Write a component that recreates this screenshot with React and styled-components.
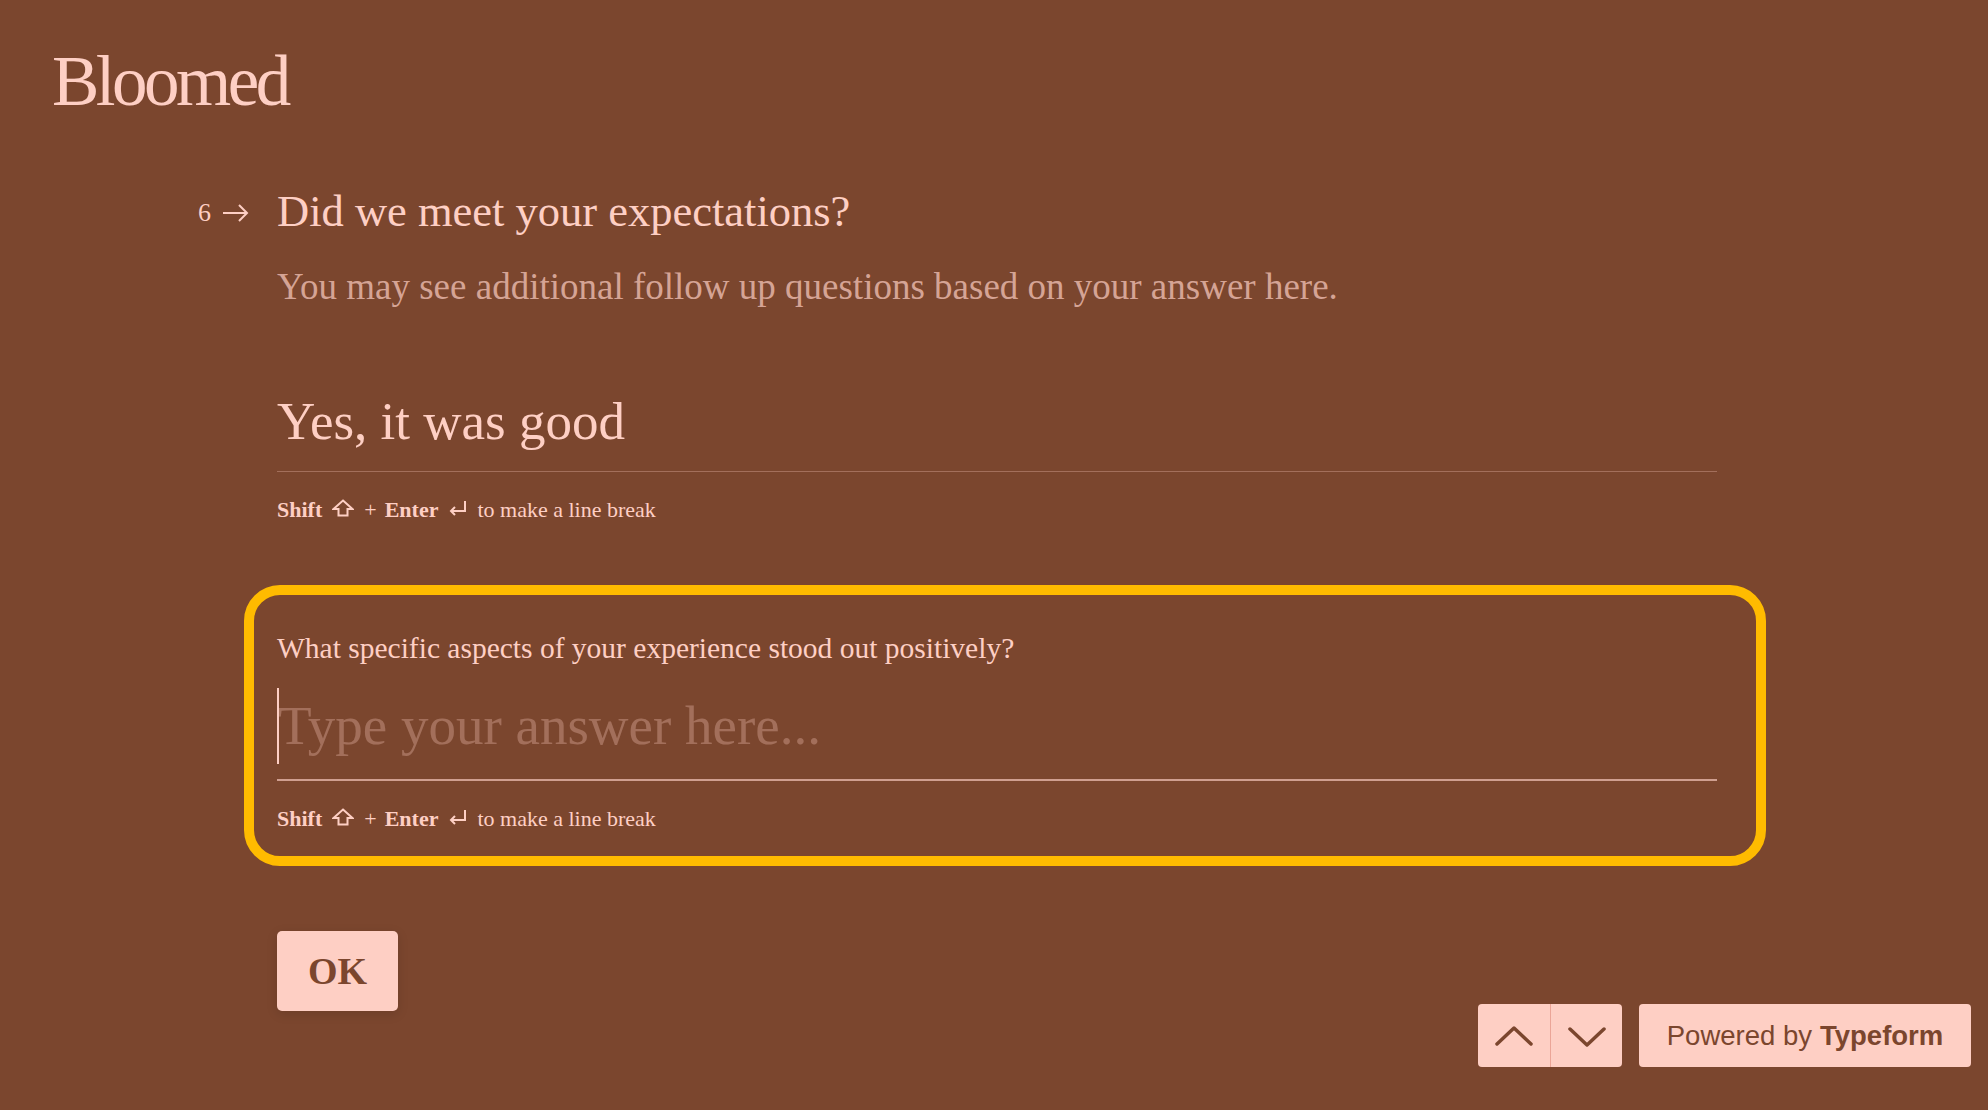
import React from 'react'
import styled, { createGlobalStyle } from 'styled-components'

const brown = '#7b462e'
const pink = '#fecfc4'
const serif = '"Liberation Serif", "Times New Roman", serif'

const GlobalStyle = createGlobalStyle`
  html, body {
    margin: 0;
    padding: 0;
    background: ${brown};
  }
  body {
    font-family: ${serif};
    color: ${pink};
  }
  * { box-sizing: border-box; }
`

const PageStyle = styled.div`
  min-height: 100vh;
  padding-top: 46px;
`

const LogoStyle = styled.div`
  padding-left: 52px;
  font-size: 71px;
  line-height: 71px;
  height: 71px;
  letter-spacing: -3.5px;
  color: ${pink};
`

const FormColumn = styled.div`
  margin-left: 277px;
  width: 1440px;
`

const QuestionRow = styled.div`
  display: flex;
  margin-top: 68px;
  margin-left: -79px;
`

const Counter = styled.div`
  width: 79px;
  flex-shrink: 0;
  height: 53px;
  padding-top: 3px;
  display: flex;
  align-items: center;
  gap: 11px;
  font-size: 26px;
  line-height: 26px;

  svg { display: block; }
`

const Title = styled.h1`
  margin: 0;
  font-weight: 400;
  font-size: 44.5px;
  line-height: 53px;
`

const Subtitle = styled.p`
  margin: 27px 0 0 0;
  font-size: 37px;
  line-height: 44px;
  color: rgba(254, 207, 196, 0.7);
`

const AnswerShown = styled.div`
  margin-top: 80px;
  padding-bottom: 18px;
  border-bottom: 1px solid rgba(254, 207, 196, 0.3);
  font-size: 53px;
  line-height: 64px;
`

const HintRow = styled.div`
  margin-top: 25px;
  display: flex;
  align-items: baseline;
  gap: 8px;
  font-size: 22px;
  line-height: 26px;

  b { font-weight: 700; }
  svg { margin: 0 2px; }
`

const FollowUpBox = styled.div`
  margin-top: 62px;
  margin-left: -33px;
  width: 1522px;
  padding: 34px 39px 24px 23px;
  border: 10px solid #ffbb00;
  border-radius: 36px;
`

const FollowUpLabel = styled.div`
  font-size: 29.5px;
  line-height: 38px;
`

const InputLine = styled.div`
  margin-top: 21px;
  display: flex;
  padding-bottom: 15px;
  border-bottom: 2px solid rgba(254, 207, 196, 0.65);
`

const Caret = styled.span`
  width: 2px;
  height: 76px;
  flex-shrink: 0;
  background: ${pink};
`

const Placeholder = styled.span`
  margin-left: -1px;
  font-size: 55px;
  line-height: 76px;
  color: rgba(254, 207, 196, 0.3);
`

const OkButton = styled.button`
  margin-top: 65px;
  width: 121px;
  height: 80px;
  border: none;
  border-radius: 5px;
  background: ${pink};
  color: ${brown};
  font-family: ${serif};
  font-weight: 700;
  font-size: 38px;
  box-shadow: 0 3px 12px 0 rgba(0, 0, 0, 0.12);
  cursor: pointer;
`

const Footer = styled.div`
  position: fixed;
  right: 17px;
  bottom: 43px;
  display: flex;
  gap: 17px;
`

const NavGroup = styled.div`
  display: flex;
  height: 63px;
  border-radius: 4px;
  overflow: hidden;
  background: ${pink};
`

const NavButton = styled.button`
  width: 72px;
  height: 100%;
  border: none;
  background: transparent;
  display: flex;
  align-items: center;
  justify-content: center;
  padding: 0;
  padding-top: ${p => (p.down ? '3px' : '0')};
  cursor: pointer;
  & + & { border-left: 1px solid #eba597; }
`

const PoweredBy = styled.div`
  width: 332px;
  height: 63px;
  border-radius: 4px;
  background: ${pink};
  color: ${brown};
  font-family: "Liberation Sans", Arial, sans-serif;
  font-size: 27.5px;
  display: flex;
  align-items: center;
  justify-content: center;

  b { font-weight: 700; margin-left: 8px; }
`

const ArrowRight = () => (
  <svg width="27" height="18" viewBox="0 0 27 18" fill="none" stroke={pink} strokeWidth="2">
    <path d="M1 9 H25 M17 1 L25 9 L17 17" />
  </svg>
)

const ShiftIcon = () => (
  <svg width="22" height="18" viewBox="0 0 22 18" fill="none" stroke={pink} strokeWidth="2" strokeLinejoin="miter">
    <path d="M11 1.5 L20.5 10 H15.5 V16.5 H6.5 V10 H1.5 Z" />
  </svg>
)

const EnterIcon = () => (
  <svg width="19" height="17" viewBox="0 0 19 17" fill="none" stroke={pink} strokeWidth="2">
    <path d="M17 1 V11 H3 M7 7 L3 11 L7 15" />
  </svg>
)

const Chevron = ({ down }) => (
  <svg width="38" height="22" viewBox="0 0 38 22" fill="none" stroke={brown} strokeWidth="3.5" strokeLinecap="round" strokeLinejoin="round">
    <path d={down ? 'M2 3 L19 19 L36 3' : 'M2 19 L19 3 L36 19'} />
  </svg>
)

const Hint = () => (
  <HintRow>
    <b>Shift</b>
    <ShiftIcon />
    <span>+</span>
    <b>Enter</b>
    <EnterIcon />
    <span>to make a line break</span>
  </HintRow>
)

export default function App() {
  return (
    <PageStyle>
      <GlobalStyle />
      <LogoStyle>Bloomed</LogoStyle>
      <FormColumn>
        <QuestionRow>
          <Counter>
            <span>6</span>
            <ArrowRight />
          </Counter>
          <Title>Did we meet your expectations?</Title>
        </QuestionRow>
        <Subtitle>You may see additional follow up questions based on your answer here.</Subtitle>
        <AnswerShown>Yes, it was good</AnswerShown>
        <Hint />
        <FollowUpBox>
          <FollowUpLabel>What specific aspects of your experience stood out positively?</FollowUpLabel>
          <InputLine>
            <Caret />
            <Placeholder>Type your answer here...</Placeholder>
          </InputLine>
          <Hint />
        </FollowUpBox>
        <OkButton>OK</OkButton>
      </FormColumn>
      <Footer>
        <NavGroup>
          <NavButton aria-label="previous"><Chevron /></NavButton>
          <NavButton down aria-label="next"><Chevron down /></NavButton>
        </NavGroup>
        <PoweredBy>Powered by<b>Typeform</b></PoweredBy>
      </Footer>
    </PageStyle>
  )
}
